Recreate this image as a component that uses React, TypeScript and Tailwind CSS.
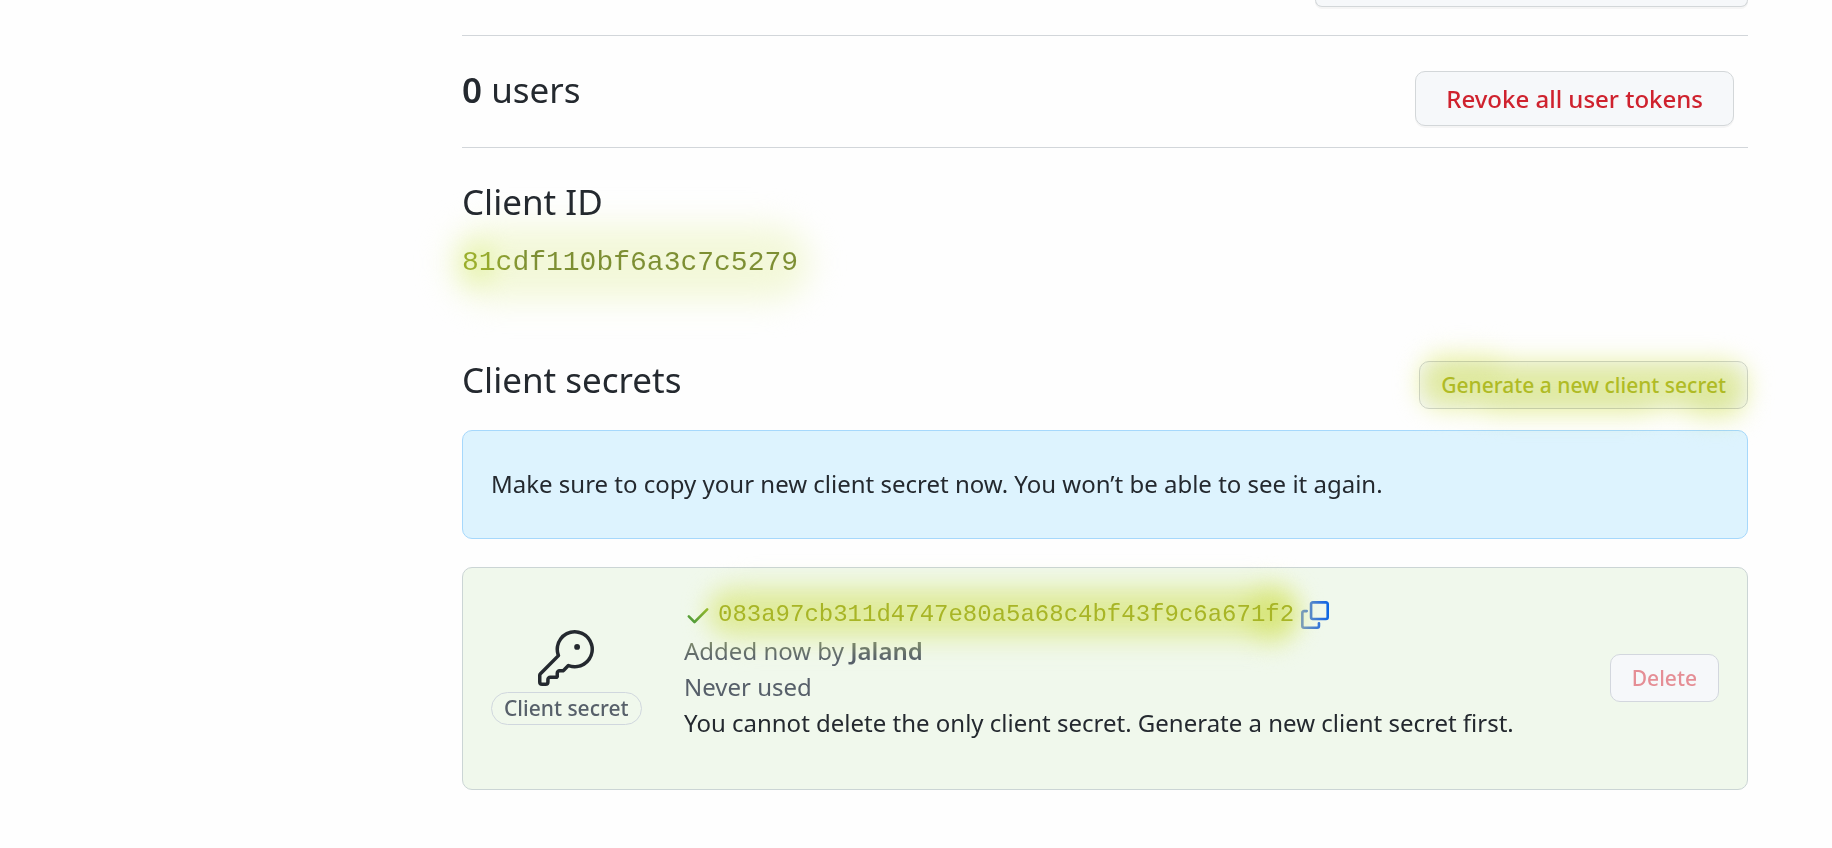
import type { ReactNode } from "react";

const sans = "font-['Noto_Sans',sans-serif]";
const mono = "font-['Liberation_Mono',monospace]";

function Glow({ className }: { className: string }) {
  return (
    <span
      aria-hidden="true"
      className={`pointer-events-none absolute rounded-full mix-blend-multiply ${className}`}
    />
  );
}

function Heading({ children }: { children: ReactNode }) {
  return <h2 className="text-[35px] leading-[52px] font-normal">{children}</h2>;
}

function KeyIcon() {
  return (
    <svg aria-hidden="true" viewBox="0 0 24 24" className="size-14 fill-[#24292f]">
      <path d="M16.75 8.5a1.25 1.25 0 1 0 0-2.5 1.25 1.25 0 0 0 0 2.5Z" />
      <path d="M15.75 0a8.25 8.25 0 1 1-2.541 16.101l-1.636 1.636a1.744 1.744 0 0 1-1.237.513H9.25a.25.25 0 0 0-.25.25v1.448a.876.876 0 0 1-.256.619l-.214.213a.75.75 0 0 1-.545.22H5.25a.25.25 0 0 0-.25.25v1A1.75 1.75 0 0 1 3.25 24h-1.5A1.75 1.75 0 0 1 0 22.25v-2.836c0-.464.185-.908.513-1.236l7.386-7.388A8.249 8.249 0 0 1 15.75 0ZM9 8.25a6.733 6.733 0 0 0 .463 2.462.75.75 0 0 1-.168.804l-7.722 7.721a.25.25 0 0 0-.073.177v2.836c0 .138.112.25.25.25h1.5a.25.25 0 0 0 .25-.25v-1c0-.966.784-1.75 1.75-1.75H7.5v-1c0-.966.784-1.75 1.75-1.75h1.086a.25.25 0 0 0 .177-.073l1.971-1.972a.75.75 0 0 1 .804-.168A6.75 6.75 0 1 0 9 8.25Z" />
    </svg>
  );
}

function CheckIcon() {
  return (
    <svg aria-hidden="true" viewBox="0 0 16 16" className="size-7 shrink-0">
      <defs>
        <linearGradient id="check-fill" x1="0" x2="1" y1="1" y2="0">
          <stop offset="0.1" stopColor="#4c9a3a" />
          <stop offset="1" stopColor="#9abb2a" />
        </linearGradient>
      </defs>
      <path
        fill="url(#check-fill)"
        d="M13.78 4.22a.75.75 0 0 1 0 1.06l-7.25 7.25a.75.75 0 0 1-1.06 0L2.22 9.28a.751.751 0 0 1 .018-1.042.751.751 0 0 1 1.042-.018L6 10.94l6.72-6.72a.75.75 0 0 1 1.06 0Z"
      />
    </svg>
  );
}

function CopyIcon() {
  return (
    <svg aria-hidden="true" viewBox="0 0 16 16" className="size-7">
      <defs>
        <linearGradient id="copy-fill" x1="0" x2="1" y1="0" y2="0">
          <stop offset="0" stopColor="#7f9fb4" />
          <stop offset="0.75" stopColor="#2a6fdd" />
          <stop offset="1" stopColor="#0a66e4" />
        </linearGradient>
      </defs>
      <path
        fill="url(#copy-fill)"
        d="M0 6.75C0 5.784.784 5 1.75 5h1.5a.75.75 0 0 1 0 1.5h-1.5a.25.25 0 0 0-.25.25v7.5c0 .138.112.25.25.25h7.5a.25.25 0 0 0 .25-.25v-1.5a.75.75 0 0 1 1.5 0v1.5A1.75 1.75 0 0 1 9.25 16h-7.5A1.75 1.75 0 0 1 0 14.25Z M5 1.75C5 .784 5.784 0 6.75 0h7.5C15.216 0 16 .784 16 1.75v7.5A1.75 1.75 0 0 1 14.25 11h-7.5A1.75 1.75 0 0 1 5 9.25Zm1.75-.25a.25.25 0 0 0-.25.25v7.5c0 .138.112.25.25.25h7.5a.25.25 0 0 0 .25-.25v-7.5a.25.25 0 0 0-.25-.25Z"
      />
    </svg>
  );
}

export default function App() {
  return (
    <main
      className={`${sans} min-h-screen overflow-hidden bg-[#fefefe] pr-[84px] pb-12 pl-[462px] text-[24px] leading-9 text-[#24292f]`}
    >
      <section className="flex h-9 items-start justify-end border-b border-[#d2d6da]">
        <button
          type="button"
          aria-label="Transfer ownership"
          className="h-[7px] w-[433px] rounded-b-[10px] border border-t-0 border-[#d3d7d9] bg-[#f6f8fa] shadow-[0_2px_0_rgba(27,31,36,0.04)]"
        />
      </section>

      <section className="flex items-start justify-between border-b border-[#d2d6da] pt-7 pb-[21px]">
        <Heading>
          <strong className="font-semibold">0</strong> users
        </Heading>
        <button
          type="button"
          className="mt-[7px] mr-[14px] h-[55px] rounded-[10px] border border-[#d3d7d9] bg-[#f6f8fa] px-[30px] font-medium text-[#cf222e] shadow-[0_2px_0_rgba(27,31,36,0.04)]"
        >
          Revoke all user tokens
        </button>
      </section>

      <section className="pt-7">
        <Heading>Client ID</Heading>
        <div className="relative mt-[14px] w-fit">
          <Glow className="-inset-x-3 -top-4 -bottom-4 bg-[#f4f9da] blur-lg" />
          <Glow className="top-0 bottom-0 left-0 w-8 bg-[#f3facf] blur-md" />
          <code
            className={`${mono} relative block bg-linear-to-r from-[#9aae2c] from-5% to-[#7d8f33] to-20% bg-clip-text text-[28px] leading-[42px] text-transparent`}
          >
            81cdf110bf6a3c7c5279
          </code>
        </div>
      </section>

      <section className="pt-[70px]">
        <div className="flex items-start justify-between">
          <Heading>Client secrets</Heading>
          <div className="relative mt-[7px]">
            <button
              type="button"
              className="h-12 rounded-[10px] border border-[#d3d7d9] bg-[#f6f8fa] px-[21px] text-[21px] leading-8 font-medium text-[#c0c636]"
            >
              Generate a new client secret
            </button>
            <Glow className="inset-x-0 top-0 bottom-0 bg-[#ebf2ab] blur-md" />
            <Glow className="-top-3 bottom-7 left-1 w-20 bg-[#f9fbe4] blur-md" />
            <Glow className="top-8 right-1 -bottom-3 w-14 bg-[#f4f8d6] blur-md" />
            <Glow className="top-9 left-16 right-24 -bottom-2 bg-[#f7fadf] blur-md" />
          </div>
        </div>

        <div className="mt-[21px] rounded-[10px] border border-[#a6d8fc] bg-[#ddf3fe] px-7 pt-[35px] pb-9">
          <p>Make sure to copy your new client secret now. You won’t be able to see it again.</p>
        </div>

        <article className="mt-7 flex items-center rounded-[10px] border border-[#cbd5d5] bg-[#f0f8ec] px-7 pt-7 pb-[30px]">
          <div className="flex w-[193px] shrink-0 flex-col items-start">
            <div className="flex flex-col items-center">
              <KeyIcon />
              <span className="mt-[6px] rounded-full border border-[#d0d7de] px-3 text-[21px] leading-[31px] font-medium text-[#57606a]">
                Client secret
              </span>
            </div>
          </div>

          <div className="flex-1 self-start pb-[18px]">
            <div className="relative flex w-fit items-center">
              <Glow className="-top-1 bottom-0 left-6 right-8 bg-[#f3f6b4] blur-md" />
              <Glow className="-top-4 -bottom-3 left-6 right-8 bg-[#fafbe8] blur-md" />
              <Glow className="-top-3 -bottom-3 right-8 w-12 bg-[#f7f9cc] blur-md" />
              <span className="relative flex">
                <CheckIcon />
              </span>
              <code
                className={`${mono} relative ml-[6px] text-[24px] leading-[37px] text-[#a8b526]`}
              >
                083a97cb311d4747e80a5a68c4bf43f9c6a671f2
              </code>
              <button type="button" aria-label="Copy client secret" className="relative ml-[7px]">
                <CopyIcon />
              </button>
            </div>
            <p className="relative w-fit bg-linear-to-b from-[#87946a] from-15% to-[#57606a] to-75% bg-clip-text text-transparent">
              Added now by <strong className="font-semibold">Jaland</strong>
            </p>
            <p className="text-[#57606a]">Never used</p>
            <p>You cannot delete the only client secret. Generate a new client secret first.</p>
          </div>

          <button
            type="button"
            disabled
            className="h-12 shrink-0 rounded-[10px] border border-[#d3d7de] bg-[#f6f8fa] px-[21px] text-[21px] leading-8 font-medium text-[#e58e95]"
          >
            Delete
          </button>
        </article>
      </section>
    </main>
  );
}
